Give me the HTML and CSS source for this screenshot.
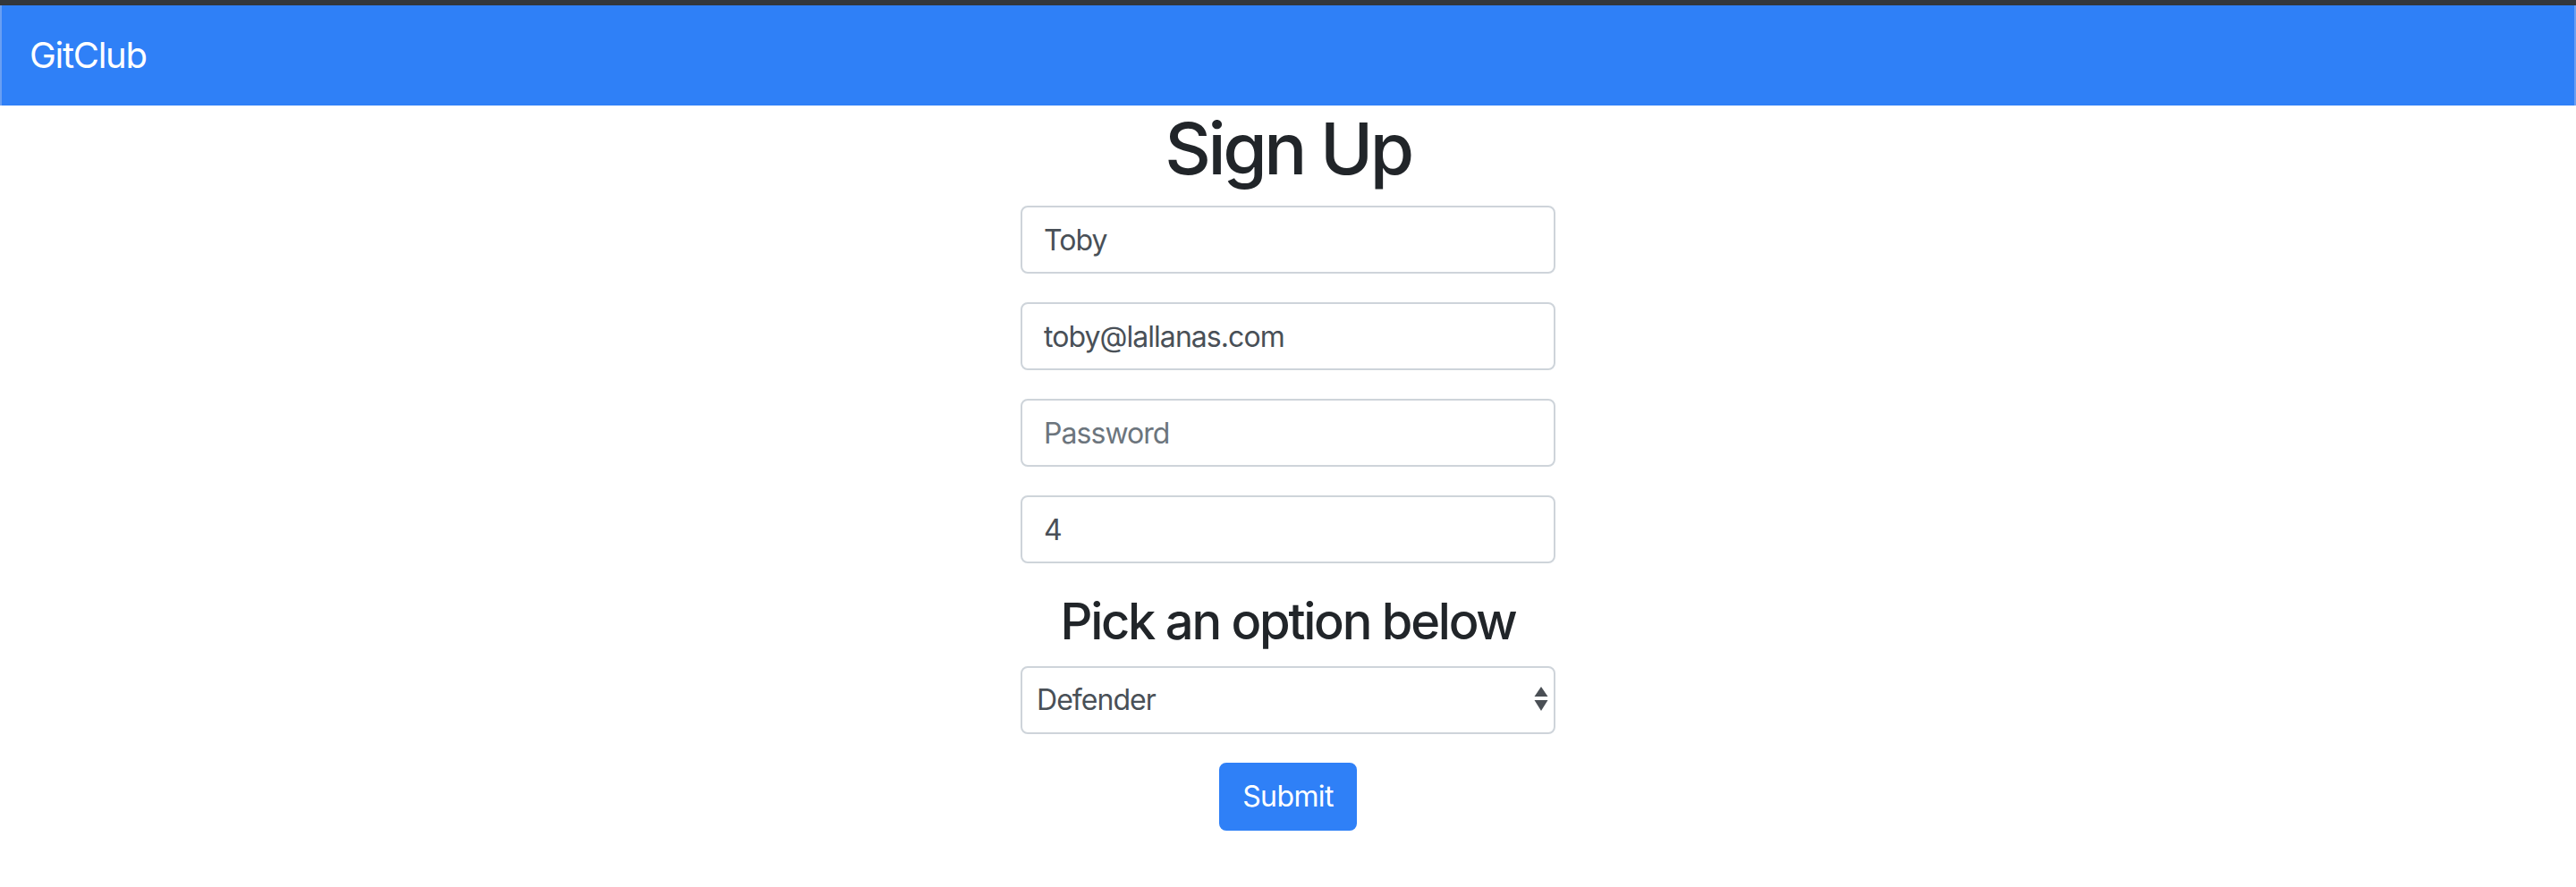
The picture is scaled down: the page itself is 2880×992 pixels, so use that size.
FILE: index.html
```html
<!DOCTYPE html>
<html lang="en">
<head>
<meta charset="utf-8">
<title>GitClub - Sign Up</title>
<link rel="stylesheet" href="styles.css">
</head>
<body>
<div class="topbar"></div>
<nav class="navbar">
  <a class="brand" href="#">GitClub</a>
</nav>
<main class="page">
  <h1 class="title">Sign Up</h1>
  <form class="signup">
    <div class="group">
      <input class="control" type="text" value="Toby">
    </div>
    <div class="group">
      <input class="control" type="email" value="toby@lallanas.com">
    </div>
    <div class="group">
      <input class="control" type="password" placeholder="Password">
    </div>
    <div class="group">
      <input class="control number" type="number" value="4">
    </div>
    <h3 class="subtitle">Pick an option below</h3>
    <div class="group select-wrap">
      <select class="control select">
        <option>Defender</option>
        <option>Midfielder</option>
        <option>Forward</option>
        <option>Goalkeeper</option>
      </select>
      <svg class="select-arrows" width="16" height="30" viewBox="0 0 16 30" aria-hidden="true">
        <polygon points="8,0 15.5,11 0.5,11" fill="#4a4f55"/>
        <polygon points="0.5,15 15.5,15 8,27" fill="#4a4f55"/>
      </svg>
    </div>
    <div class="actions">
      <button class="btn" type="button">Submit</button>
    </div>
  </form>
</main>
</body>
</html>
```

FILE: styles.css
```css
* {
  box-sizing: border-box;
}

html, body {
  margin: 0;
  padding: 0;
  background: #ffffff;
}

body {
  font-family: Inter, "Noto Sans", "Liberation Sans", sans-serif;
  font-size: 32px;
  line-height: 1.5;
  color: #212529;
}

.topbar {
  height: 6px;
  background: #33373b;
}

.navbar {
  display: flex;
  align-items: center;
  padding: 16px 31px;
  background: #2f80f7;
  border-left: 2px solid #6a9ff2;
  border-right: 2px solid #6a9ff2;
}

.brand {
  padding: 10px 0;
  font-size: 40px;
  line-height: 60px;
  color: #ffffff;
  text-decoration: none;
  letter-spacing: -1.3px;
}

.page {
  display: flex;
  flex-direction: column;
  align-items: center;
}

.title {
  margin: 0 0 16px;
  font-size: 80px;
  font-weight: 500;
  line-height: 96px;
  letter-spacing: -3.4px;
  color: #212529;
}

.signup {
  width: 598px;
  display: flex;
  flex-direction: column;
}

.group {
  margin-bottom: 32px;
}

.control {
  display: block;
  width: 100%;
  height: 76px;
  padding: 12px 24px;
  font-family: inherit;
  font-size: 32px;
  line-height: 48px;
  color: #495057;
  background: #ffffff;
  border: 2px solid #ced4da;
  border-radius: 8px;
  outline: none;
  letter-spacing: -0.95px;
}

.control::placeholder {
  color: #6c757d;
  opacity: 1;
}

.number {
  -moz-appearance: textfield;
  appearance: textfield;
}

.number::-webkit-outer-spin-button,
.number::-webkit-inner-spin-button {
  -webkit-appearance: none;
  margin: 0;
}

.subtitle {
  margin: 0 0 16px;
  text-align: center;
  font-size: 56px;
  font-weight: 500;
  line-height: 67px;
  letter-spacing: -2.25px;
  color: #212529;
}

.select-wrap {
  position: relative;
}

.select {
  -webkit-appearance: none;
  appearance: none;
  padding-left: 16px;
  padding-right: 48px;
}

.select-arrows {
  position: absolute;
  right: 8px;
  top: 23px;
  pointer-events: none;
}

.actions {
  display: flex;
  justify-content: center;
}

.btn {
  height: 76px;
  padding: 12px 24px;
  font-family: inherit;
  font-size: 32px;
  line-height: 48px;
  color: #ffffff;
  background: #2f80f7;
  border: 2px solid #2f80f7;
  border-radius: 8px;
  letter-spacing: -0.6px;
  cursor: pointer;
}
```
